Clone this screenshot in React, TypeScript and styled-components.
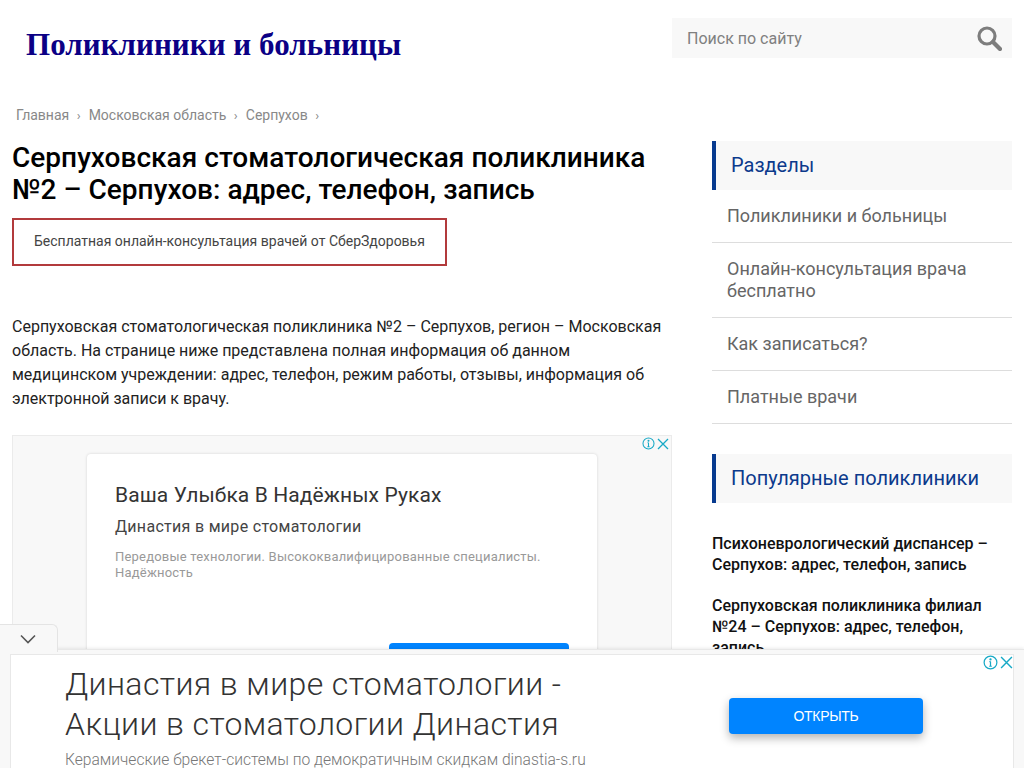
import React from "react";
import styled, { createGlobalStyle } from "styled-components";

const Global = createGlobalStyle`
  html, body { margin: 0; padding: 0; height: 768px; overflow: hidden; background: #fff; }
  body { font-family: Roboto, "Liberation Sans", sans-serif; }
  * { box-sizing: border-box; }
`;

const Page = styled.div`
  width: 1024px;
  padding: 18px 12px 0;
`;
const Header = styled.header`
  display: flex;
  justify-content: space-between;
  align-items: flex-start;
  height: 87px;
`;
const Logo = styled.a`
  font: bold 31px/32px "Liberation Serif", serif;
  letter-spacing: 0.05px;
  color: #0b0085;
  margin: 11px 0 0 14px;
`;
const Search = styled.div`
  width: 340px;
  height: 40px;
  background: #f8f8f8;
  display: flex;
  align-items: center;
  justify-content: space-between;
  padding: 0 10px 0 15px;
  color: #808080;
  font-size: 16px;
`;
const Crumbs = styled.nav`
  display: flex;
  align-items: center;
  height: 20px;
  padding-left: 4px;
  font-size: 14px;
  color: #888;
`;
const Sep = styled.span`
  margin: 0 8px 0 7.5px;
  font-size: 13px;
`;
const Columns = styled.div`
  display: grid;
  grid-template-columns: 660px 300px;
  column-gap: 40px;
  margin-top: 16px;
`;
const Main = styled.main`
  min-width: 0;
`;
const Title = styled.h1`
  margin: 1px 0 0;
  font-size: 28px;
  line-height: 32px;
  font-weight: 500;
  letter-spacing: 0.03px;
  color: #000;
`;
const Promo = styled.a`
  display: block;
  width: 435px;
  height: 48px;
  margin-top: 12px;
  border: 2px solid #b23a3c;
  padding: 0 0 0 20px;
  font-size: 14px;
  line-height: 42px;
  color: #444;
`;
const Lead = styled.p`
  margin: 49px 0 0;
  font-size: 16px;
  line-height: 24px;
  color: #222;
`;
const AdBox = styled.div`
  position: relative;
  margin-top: 24px;
  height: 300px;
  background: #f8f8f8;
  border: 1px solid #ebebeb;
  border-bottom: 0;
  padding: 18px 74px 0;
`;
const AdCorner = styled.div`
  position: absolute;
  top: 1px;
  right: 2px;
  display: flex;
  align-items: center;
  gap: 2px;
`;
const AdCard = styled.div`
  background: #fff;
  border-radius: 4px;
  box-shadow: 0 0 3px rgba(0, 0, 0, 0.15);
  height: 280px;
  padding: 27px 28px 0;
`;
const AdTitle = styled.div`
  font-size: 21px;
  line-height: 28px;
  letter-spacing: 0.1px;
  color: #333;
`;
const AdSub = styled.div`
  margin-top: 8px;
  font-size: 16px;
  line-height: 20px;
  letter-spacing: 0.3px;
  color: #444;
`;
const AdDesc = styled.div`
  margin-top: 12px;
  font-size: 13px;
  line-height: 16px;
  letter-spacing: 0.2px;
  color: #999;
`;
const AdButton = styled.div`
  width: 180px;
  height: 40px;
  margin: 62px 0 0 274px;
  background: #0084ff;
  border-radius: 4px;
`;
const Side = styled.aside`
  min-width: 0;
`;
const SideHead = styled.h3<{ $gap?: number }>`
  margin: ${(p) => p.$gap ?? 0}px 0 0;
  height: 49px;
  background: #f8f8f8;
  border-left: 4px solid #073a8f;
  padding-left: 15px;
  font-size: 20px;
  line-height: 49px;
  font-weight: 400;
  color: #0c3a8c;
`;
const Nav = styled.ul`
  list-style: none;
  margin: 0;
  padding: 0;
`;
const NavItem = styled.li`
  padding: 15px 15px 15px;
  font-size: 18px;
  line-height: 22px;
  color: #666;
  border-bottom: 1px solid #ddd;
`;
const Popular = styled.div`
  margin-top: 30px;
  display: flex;
  flex-direction: column;
  gap: 20px;
`;
const PopLink = styled.a`
  font-size: 16px;
  line-height: 21px;
  font-weight: 500;
  color: #111;
`;
const Tab = styled.div`
  position: fixed;
  left: 0;
  top: 624px;
  width: 58px;
  height: 28px;
  background: #f8f8f8;
  border: 1px solid #e4e4e4;
  border-left: 0;
  border-bottom: 0;
  border-radius: 0 6px 0 0;
  display: flex;
  justify-content: center;
  padding: 9px 2px 0 0;
  z-index: 3;
`;
const Sticky = styled.div`
  position: fixed;
  left: 0;
  right: 0;
  top: 649px;
  height: 119px;
  background: #f8f8f8;
  border-top: 1px solid #e8e8e8;
  box-shadow: 0 -1px 3px rgba(0, 0, 0, 0.08);
  padding: 4px 10px 0;
  z-index: 2;
`;
const StickyInner = styled.div`
  position: relative;
  height: 115px;
  background: #fff;
  border: 1px solid #e8e8e8;
  border-bottom: 0;
  display: flex;
  justify-content: space-between;
  padding: 9px 90px 0 54px;
`;
const StickyCorner = styled.div`
  position: absolute;
  top: 0;
  right: 0;
  display: flex;
  align-items: center;
  gap: 2px;
`;
const StickyCopy = styled.div`
  width: 560px;
`;
const StickyTitle = styled.div`
  font-size: 32px;
  line-height: 40px;
  font-weight: 300;
  letter-spacing: 0.4px;
  color: #333;
`;
const StickySub = styled.div`
  margin-top: 6px;
  font-size: 15.6px;
  line-height: 20px;
  font-weight: 300;
  color: #777;
`;
const OpenButton = styled.div`
  width: 194px;
  height: 36px;
  margin-top: 34px;
  background: #0084ff;
  border-radius: 4px;
  box-shadow: 0 4px 10px rgba(0, 0, 0, 0.3);
  color: #fff;
  font: 14px/36px "Liberation Sans", sans-serif;
  letter-spacing: -0.3px;
  text-align: center;
`;

const Info = ({ size }: { size: number }) => (
  <svg width={size} height={size} viewBox="0 0 16 16" fill="none" stroke="#17a9c6" strokeWidth="1.3">
    <circle cx="8" cy="8" r="6.8" />
    <path d="M8 7v5M6.6 12h2.8M6.8 7H8" />
    <circle cx="8" cy="4.6" r="0.6" fill="#17a9c6" />
  </svg>
);
const Close = ({ size }: { size: number }) => (
  <svg width={size} height={size} viewBox="0 0 12 12" fill="none" stroke="#17a9c6" strokeWidth="1.3">
    <path d="M1 1l10 10M11 1L1 11" />
  </svg>
);

export default function App() {
  return (
    <>
      <Global />
      <Page>
        <Header>
          <Logo>Поликлиники и больницы</Logo>
          <Search>
            Поиск по сайту
            <svg width="25" height="25" viewBox="0 0 25 25" fill="none" stroke="#7d7d7d">
              <circle cx="10" cy="10" r="8" strokeWidth="3.2" />
              <path d="M16 16l7 7" strokeWidth="4.2" strokeLinecap="round" />
            </svg>
          </Search>
        </Header>
        <Crumbs>
          Главная<Sep>›</Sep>Московская область<Sep>›</Sep>Серпухов<Sep>›</Sep>
        </Crumbs>
        <Columns>
          <Main>
            <Title>
              Серпуховская стоматологическая поликлиника №2 – Серпухов: адрес, телефон, запись
            </Title>
            <Promo>Бесплатная онлайн-консультация врачей от СберЗдоровья</Promo>
            <Lead>
              Серпуховская стоматологическая поликлиника №2 – Серпухов, регион – Московская область. На
              странице ниже представлена полная информация об данном медицинском учреждении: адрес,
              телефон, режим работы, отзывы, информация об электронной записи к врачу.
            </Lead>
            <AdBox>
              <AdCorner>
                <Info size={13} />
                <Close size={12} />
              </AdCorner>
              <AdCard>
                <AdTitle>Ваша Улыбка В Надёжных Руках</AdTitle>
                <AdSub>Династия в мире стоматологии</AdSub>
                <AdDesc>Передовые технологии. Высококвалифицированные специалисты. Надёжность</AdDesc>
                <AdButton />
              </AdCard>
            </AdBox>
          </Main>
          <Side>
            <SideHead>Разделы</SideHead>
            <Nav>
              <NavItem>Поликлиники и больницы</NavItem>
              <NavItem>Онлайн-консультация врача бесплатно</NavItem>
              <NavItem>Как записаться?</NavItem>
              <NavItem>Платные врачи</NavItem>
            </Nav>
            <SideHead $gap={30}>Популярные поликлиники</SideHead>
            <Popular>
              <PopLink>Психоневрологический диспансер – Серпухов: адрес, телефон, запись</PopLink>
              <PopLink>Серпуховская поликлиника филиал №24 – Серпухов: адрес, телефон, запись</PopLink>
            </Popular>
          </Side>
        </Columns>
      </Page>
      <Tab>
        <svg width="16" height="10" viewBox="0 0 16 10" fill="none" stroke="#555" strokeWidth="1.6">
          <path d="M1 1.5l7 7 7-7" />
        </svg>
      </Tab>
      <Sticky>
        <StickyInner>
          <StickyCorner>
            <Info size={15} />
            <Close size={13} />
          </StickyCorner>
          <StickyCopy>
            <StickyTitle>Династия в мире стоматологии - Акции в стоматологии Династия</StickyTitle>
            <StickySub>Керамические брекет-системы по демократичным скидкам dinastia-s.ru</StickySub>
          </StickyCopy>
          <OpenButton>ОТКРЫТЬ</OpenButton>
        </StickyInner>
      </Sticky>
    </>
  );
}
